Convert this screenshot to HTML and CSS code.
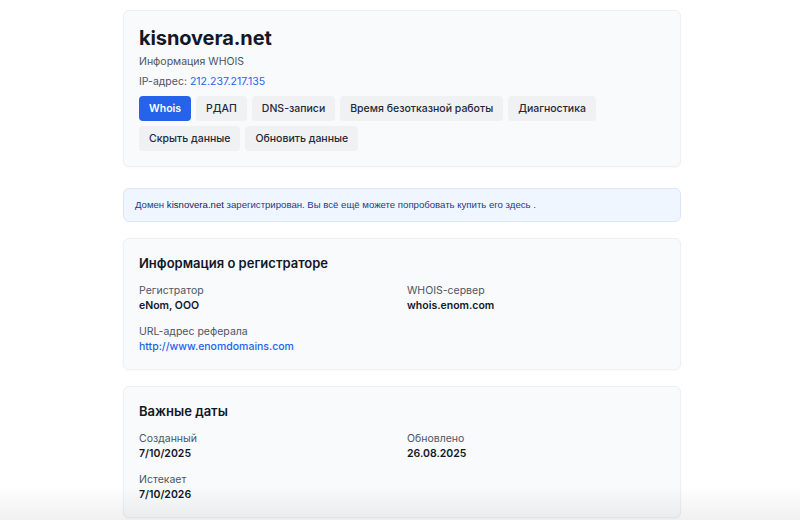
FILE: index.html
```html
<!DOCTYPE html>
<html lang="ru">
  <head>
    <meta charset="UTF-8" />
    <meta name="viewport" content="width=device-width, initial-scale=1.0" />
    <title>kisnovera.net — WHOIS</title>
    <link rel="stylesheet" href="styles.css">
  </head>
  <body>
    <div class="page">
      <div class="card head">
        <h1>kisnovera.net</h1>
        <p class="sub">Информация WHOIS</p>
        <p class="sub ip">IP-адрес: <a href="#">212.237.217.135</a></p>
        <div class="tabs">
          <button class="tab active">Whois</button>
          <button class="tab">РДАП</button>
          <button class="tab">DNS-записи</button>
          <button class="tab">Время безотказной работы</button>
          <button class="tab">Диагностика</button>
          <button class="tab">Скрыть данные</button>
          <button class="tab">Обновить данные</button>
        </div>
      </div>

      <div class="notice">
        Домен <b>kisnovera.net</b> зарегистрирован. Вы всё ещё можете попробовать купить его здесь .
      </div>

      <div class="card">
        <h2>Информация о регистраторе</h2>
        <div class="fields">
          <div class="field">
            <div class="label">Регистратор</div>
            <div class="value">eNom, ООО</div>
          </div>
          <div class="field">
            <div class="label">WHOIS-сервер</div>
            <div class="value">whois.enom.com</div>
          </div>
          <div class="field">
            <div class="label">URL-адрес реферала</div>
            <div class="value"><a href="#">http://www.enomdomains.com</a></div>
          </div>
        </div>
      </div>

      <div class="card">
        <h2>Важные даты</h2>
        <div class="fields">
          <div class="field">
            <div class="label">Созданный</div>
            <div class="value">7/10/2025</div>
          </div>
          <div class="field">
            <div class="label">Обновлено</div>
            <div class="value">26.08.2025</div>
          </div>
          <div class="field">
            <div class="label">Истекает</div>
            <div class="value">7/10/2026</div>
          </div>
        </div>
      </div>
    </div>
    <div class="fade"></div>
  </body>
</html>
```

FILE: styles.css
```css
body {
  margin: 0;
  background: #fff;
  font-family: Inter, "Noto Sans", sans-serif;
  color: #111827;
}
.page {
  width: 558px;
  margin: 10px 0 0 123px;
}
.card {
  background: #f9fafb;
  border: 1px solid #eef0f2;
  border-radius: 6px;
  box-shadow: 0 1px 2px rgba(0, 0, 0, 0.03);
  padding: 15px;
  margin-bottom: 16px;
}
.head {
  margin-bottom: 21px;
}
h1 {
  font-size: 20px;
  line-height: 24px;
  font-weight: 700;
  margin: 0 0 5px;
  letter-spacing: -0.1px;
}
.sub {
  font-size: 10.5px;
  line-height: 14px;
  color: #4b5563;
  margin: 0 0 6px;
}
.ip {
  margin-bottom: 7px;
}
a {
  color: #2563eb;
  text-decoration: none;
}
.tabs {
  display: flex;
  flex-wrap: wrap;
  gap: 5px;
}
.tab {
  font-family: inherit;
  font-size: 10.5px;
  font-weight: 500;
  color: #1f2937;
  height: 25px;
  padding: 0 10px;
  border: none;
  border-radius: 4px;
  background: #f0f1f3;
}
.tab.active {
  background: #2563eb;
  color: #fff;
  font-weight: 600;
}
.notice {
  background: #eff6ff;
  border: 1px solid #dbe7f8;
  border-radius: 6px;
  padding: 0 11px;
  height: 32px;
  line-height: 32px;
  font-family: "Liberation Sans", Arial, sans-serif;
  font-size: 9.6px;
  color: #1e3a8a;
  margin-bottom: 16px;
}
.notice b {
  font-weight: normal;
  color: #172554;
}
h2 {
  font-size: 13px;
  line-height: 18px;
  font-weight: 600;
  margin: 0 0 11px;
}
.fields {
  display: grid;
  grid-template-columns: 1fr 1fr;
  column-gap: 10px;
  row-gap: 11px;
}
.label {
  font-size: 10.5px;
  line-height: 15px;
  color: #4b5563;
}
.value {
  font-size: 10.5px;
  line-height: 15px;
  font-weight: 600;
}
.value a {
  font-weight: 500;
}
.fade {
  position: fixed;
  left: 0;
  right: 0;
  bottom: 0;
  height: 34px;
  background: linear-gradient(to bottom, rgba(0, 0, 0, 0), rgba(0, 0, 0, 0.06));
  pointer-events: none;
}
```
